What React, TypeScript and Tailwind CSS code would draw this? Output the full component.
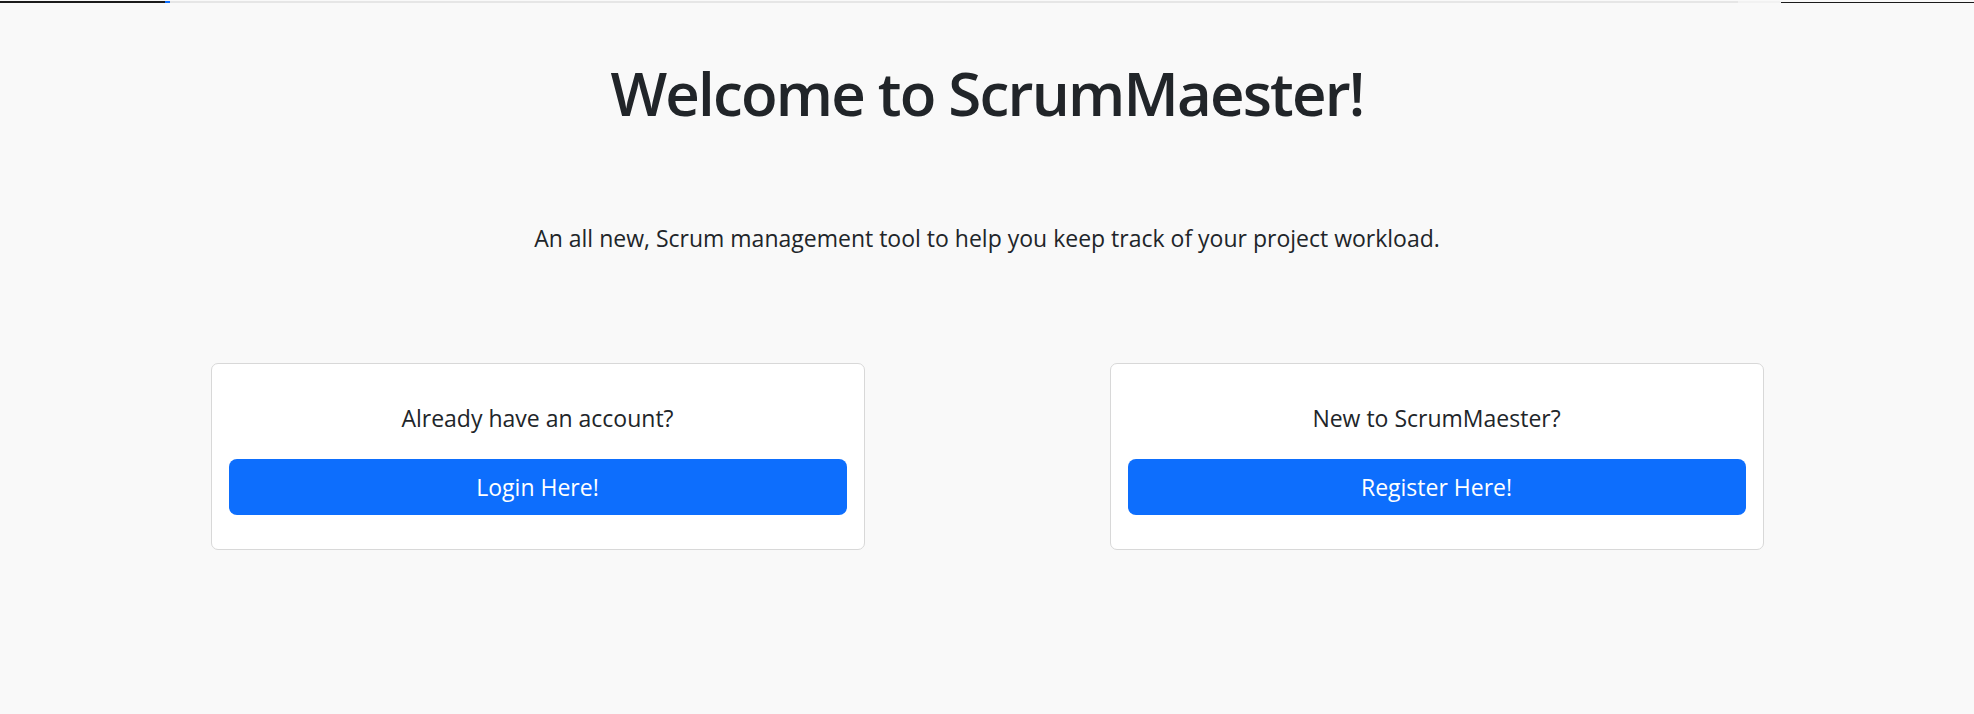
export default function App() {
  return (
    <div className="min-h-screen w-full bg-[#f9f9f9] text-[#212529] font-['Open_Sans',_'Noto_Sans',_sans-serif]">
      {/* top strip */}
      <div className="flex h-[3px] items-start">
        <span className="mt-px h-[2px] w-[165px] bg-[#1c1c1c]" />
        <span className="mt-px h-[2px] w-[5px] bg-[#0d6efd]" />
        <span className="mt-px h-[2px] flex-1 bg-[#e6e6e6]" />
        <span className="mt-px h-[2px] w-[43px] bg-[#f2f2f2]" />
        <span className="mt-[2px] h-px w-[193px] bg-[#1c1c1c]" />
      </div>

      <div className="flex flex-col items-center">
        <h1 className="mt-[48px] text-[60px] leading-[84px] font-semibold tracking-[-1.8px]">
          Welcome to ScrumMaester!
        </h1>
        <p className="mt-[85px] text-[23px] leading-[36px]">
          An all new, Scrum management tool to help you keep track of your project workload.
        </p>

        <div className="mt-[107px] flex gap-[245px]">
          <Card question="Already have an account?" label="Login Here!" />
          <Card question="New to ScrumMaester?" label="Register Here!" />
        </div>
      </div>
    </div>
  );
}

function Card({ question, label }: { question: string; label: string }) {
  return (
    <div className="w-[654px] rounded-[7px] border border-[#d8d8d8] bg-white px-[17px] pt-[36px] pb-[34px]">
      <p className="text-center text-[23px] leading-[36px]">{question}</p>
      <button className="mt-[23px] h-[56px] w-full rounded-[8px] bg-[#0d6efd] text-[23px] text-white">
        {label}
      </button>
    </div>
  );
}
